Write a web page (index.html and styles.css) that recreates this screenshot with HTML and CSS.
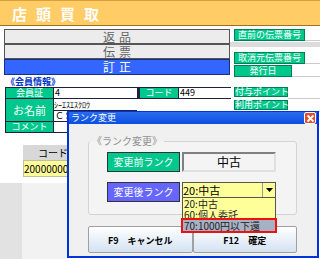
FILE: index.html
```html
<!DOCTYPE html>
<html>
<head>
    <title>店頭買取</title>
    <link rel="stylesheet" href="styles.css">
</head>
<body>
    <div class="header">
        <h1>店頭買取</h1>
    </div>

    <div class="top">
        <div class="slips">
            <div class="slip">返品</div>
            <div class="slip">伝票</div>
            <div class="slip active">訂正</div>
        </div>
        <div class="slip-info">
            <div class="info-row"><span class="tag">直前の伝票番号</span><span class="box"></span></div>
            <div class="info-sep"></div>
            <div class="info-row"><span class="tag">取消元伝票番号</span><span class="box"></span></div>
            <div class="info-row"><span class="tag short">発行日</span><span class="box"></span></div>
        </div>
    </div>

    <div class="member-title">《会員情報》</div>
    <div class="member">
        <div class="member-grid">
            <div class="tag">会員証</div>
            <div class="field">4</div>
            <div class="tag code">コード</div>
            <div class="field">449</div>
            <div class="tag tall">お名前</div>
            <div class="name-cell">
                <div class="kana">ｼｰｴｽｴｽｸﾛｳ</div>
                <div class="field name">ＣＳ</div>
            </div>
            <div class="tag">コメント</div>
            <div class="field comment"></div>
        </div>
        <div class="points">
            <div class="info-row"><span class="tag">付与ポイント</span><span class="box"></span></div>
            <div class="info-row"><span class="tag">利用ポイント</span><span class="box"></span></div>
        </div>
    </div>

    <div class="items">
        <div class="col-head">コード</div>
        <div class="col-cell">2000000040</div>
    </div>
    <div class="lower">
        <div class="lower-side"></div>
        <div class="lower-main"></div>
    </div>

    <!-- rank change dialog -->
    <div class="dialog">
        <div class="titlebar">
            <span>ランク変更</span>
            <span class="close">
                <svg width="9" height="9" viewBox="0 0 9 9"><path d="M1.5 1.5 L7.5 7.5 M7.5 1.5 L1.5 7.5" stroke="#fff" stroke-width="1.8"/></svg>
            </span>
        </div>
        <div class="dialog-body">
            <fieldset class="group">
                <legend>《ランク変更》</legend>
                <div class="rank-row">
                    <div class="rank-btn before">変更前ランク</div>
                    <div class="rank-value">中古</div>
                </div>
                <div class="rank-row">
                    <div class="rank-btn after">変更後ランク</div>
                    <div class="combo">
                        <span>20:中古</span>
                        <span class="arrow">
                            <svg width="7" height="4" viewBox="0 0 7 4"><path d="M0 0 H7 L3.5 4 Z" fill="#000"/></svg>
                        </span>
                    </div>
                </div>
            </fieldset>
            <div class="buttons">
                <div class="btn">F9　キャンセル</div>
                <div class="btn">F12　確定</div>
            </div>
        </div>
        <div class="dropdown">
            <div class="opt">20:中古</div>
            <div class="opt">60:個人委託</div>
            <div class="opt selected">70:1000円以下還</div>
        </div>
    </div>
</body>
</html>
```

FILE: styles.css
```css
body {
    margin: 0;
    width: 320px;
    height: 259px;
    overflow: hidden;
    position: relative;
    background-color: #fff;
    font-family: "Noto Sans CJK JP", sans-serif;
    font-size: 10px;
    color: #000;
}
.header {
    height: 24px;
    background-color: #ffcc66;
    border-top: 1px solid #d8a040;
    border-bottom: 1px solid #a07020;
    display: flex;
    align-items: center;
    padding-left: 12px;
}
.header h1 {
    margin: 0;
    color: #fff;
    font-size: 15px;
    font-weight: bold;
    letter-spacing: 9px;
    line-height: 1;
}
.top {
    display: flex;
    padding: 3px 0 0 4px;
}
.slips {
    width: 226px;
}
.slip {
    height: 13px;
    border: 1px solid #555;
    background-color: #ececec;
    color: #666;
    font-size: 12px;
    line-height: 13px;
    text-align: center;
    letter-spacing: 4px;
    padding-left: 4px;
}
.slip.active {
    height: 14px;
    line-height: 14px;
    background-color: #3366ff;
    color: #fff;
    border-color: #1a2f80;
}
.slip-info {
    flex: 1;
    margin-left: 4px;
}
.info-row {
    display: flex;
    height: 12px;
    margin-bottom: 1px;
}
.info-sep {
    height: 5px;
    margin: 0 0 5px -4px;
    background-color: #dcdcdc;
}
.tag {
    background-color: #00c88c;
    border: 1px solid #008050;
    color: #fff;
    font-size: 9px;
    line-height: 10px;
    text-align: center;
    box-sizing: border-box;
    white-space: nowrap;
}
.info-row .tag {
    width: 71px;
    height: 12px;
}
.info-row .tag.short {
    width: 58px;
}
.box {
    flex: 1;
    background-color: #fff;
    border-bottom: 1px solid #ccc;
}
.member-title {
    height: 9px;
    margin: -1px 0 0 6px;
    color: #0033cc;
    font-size: 9px;
    font-weight: bold;
    line-height: 9px;
}
.member {
    display: flex;
    margin-top: 1px;
}
.member-grid {
    margin-left: 5px;
    width: 224px;
    border: 1px solid #202040;
    background-color: #202040;
    display: grid;
    grid-template-columns: 47px 83px 40px 52px;
    grid-template-rows: 10px 22px 10px;
    gap: 1px;
}
.member-grid .tag {
    border: none;
    font-size: 9px;
    line-height: 10px;
}
.member-grid .tag.tall {
    display: flex;
    align-items: center;
    justify-content: center;
    font-size: 11px;
}
.member-grid .tag.code {
    margin-left: 2px;
}
.field {
    background-color: #fff;
    font-size: 9px;
    line-height: 10px;
    padding-left: 1px;
}
.name-cell {
    grid-column: span 3;
    background-color: #fff;
}
.kana {
    height: 11px;
    font-size: 8px;
    line-height: 11px;
}
.field.name {
    height: 10px;
    border-top: 1px solid #202040;
    width: 81px;
    border-right: 1px solid #202040;
}
.field.comment {
    grid-column: span 3;
}
.points {
    flex: 1;
    margin-left: 3px;
}
.points .info-row .tag {
    width: 54px;
    height: 10px;
    line-height: 8px;
}
.items {
    margin: 12px 0 0 23px;
    width: 70px;
}
.col-head {
    width: 45px;
    height: 15px;
    background-color: #d8d8d8;
    text-align: right;
    font-size: 10px;
    line-height: 15px;
}
.col-cell {
    height: 15px;
    background-color: #ffff99;
    border: 1px solid #c0c0a0;
    font-size: 10px;
    line-height: 15px;
    white-space: nowrap;
}
.lower {
    display: flex;
    margin-top: 6px;
    height: 80px;
}
.lower-side {
    width: 22px;
    background-color: #e2e2e2;
}
.lower-main {
    width: 46px;
    background-color: #f2f2f2;
}

/* dialog */
.dialog {
    position: absolute;
    left: 67px;
    top: 111px;
    width: 248px;
    height: 144px;
    border: 2px solid #0033dd;
    border-top: 1px solid #0033dd;
    background-color: #f0f0f0;
}
.titlebar {
    height: 12px;
    background: linear-gradient(#2a6cf0, #0b4fe0);
    color: #fff;
    font-size: 9px;
    line-height: 12px;
    padding-left: 2px;
    display: flex;
    justify-content: space-between;
}
.close {
    width: 10px;
    height: 10px;
    margin: 0 1px 0 0;
    background-color: #e0502a;
    border: 1px solid #fff;
    border-radius: 2px;
    display: flex;
    align-items: center;
    justify-content: center;
}
.dialog-body {
    padding: 11px 0 0 19px;
}
.group {
    width: 189px;
    margin: 0;
    padding: 0 0 12px 18px;
    border: 1px solid #d4d4d4;
    border-radius: 3px;
    background-color: #f4f4f4;
}
.group legend {
    margin-left: -17px;
    padding: 0 2px;
    color: #909090;
    font-size: 10px;
    line-height: 12px;
}
.rank-row {
    display: flex;
    margin-top: 10px;
}
.rank-row:first-of-type {
    margin-top: 5px;
}
.rank-btn {
    width: 71px;
    height: 18px;
    border: 1px solid #333;
    color: #fff;
    font-size: 10px;
    line-height: 18px;
    text-align: center;
}
.rank-btn.before {
    background-color: #00c88c;
}
.rank-btn.after {
    background-color: #6666ff;
}
.rank-value {
    margin-left: 2px;
    width: 90px;
    height: 16px;
    border: 2px solid #808080;
    border-right-color: #e0e0e0;
    border-bottom-color: #e0e0e0;
    background-color: #f4f4f4;
    font-size: 12px;
    line-height: 16px;
    text-align: center;
}
.combo {
    margin-left: 2px;
    width: 92px;
    height: 14px;
    border: 1px solid #555;
    background-color: #ffff99;
    display: flex;
    justify-content: space-between;
    font-size: 11px;
    line-height: 14px;
}
.arrow {
    width: 12px;
    border-left: 1px solid #999;
    background-color: #ffff99;
    display: flex;
    align-items: center;
    justify-content: center;
}
.buttons {
    display: flex;
    margin-top: 11px;
    width: 209px;
}
.btn {
    flex: 1;
    height: 25px;
    border: 1px solid #a0a0a0;
    border-radius: 2px;
    background: linear-gradient(#ffffff, #d4e2f2);
    font-size: 9px;
    font-weight: bold;
    line-height: 27px;
    text-align: center;
}
.dropdown {
    position: absolute;
    left: 113px;
    top: 85px;
    width: 92px;
    border: 1px solid #555;
    background-color: #ffff99;
}
.opt {
    height: 11px;
    padding-left: 1px;
    font-size: 10px;
    line-height: 11px;
    color: #222;
}
.opt.selected {
    background-color: #a8b0c4;
    outline: 2px solid #ee1111;
    outline-offset: 0;
}
```
